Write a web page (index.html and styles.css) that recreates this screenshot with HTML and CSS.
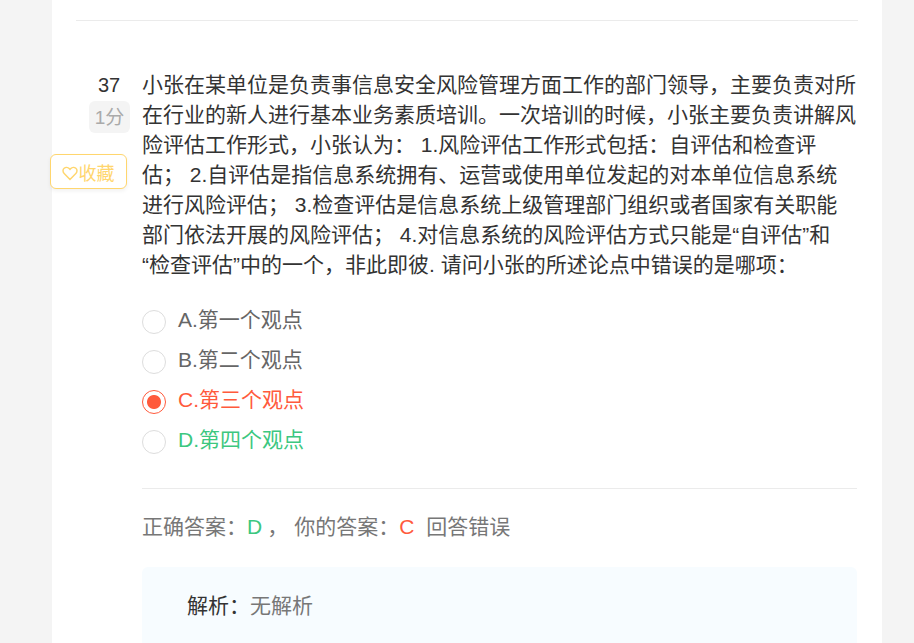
FILE: index.html
```html
<!DOCTYPE html>
<html lang="zh-CN">
<head>
    <meta charset="UTF-8">
    <meta name="viewport" content="width=device-width, initial-scale=1.0">
    <title>试题解析</title>
    <link rel="stylesheet" href="styles.css">
</head>
<body>
    <div class="card">
        <div class="top-line"></div>

        <div class="question">
            <div class="side">
                <div class="num">37</div>
                <div class="score">1分</div>
                <div class="collect">
                    <svg class="heart" viewBox="0 0 14 14" width="16" height="16">
                        <path d="M7 12.600 1.900 7.400C.5 6 .6 3.900 1.900 2.800c1.300-1.100 3.300-.9 4.400.3l.7.8.7-.8c1.100-1.200 3.100-1.400 4.400-.3 1.300 1.100 1.400 3.200 0 4.600z"/>
                    </svg>收藏
                </div>
            </div>

            <div class="main">
                <div class="stem">小张在某单位是负责事信息安全风险管理方面工作的部门领导，主要负责对所在行业的新人进行基本业务素质培训。一次培训的时候，小张主要负责讲解风险评估工作形式，小张认为： 1.风险评估工作形式包括：自评估和检查评估； 2.自评估是指信息系统拥有、运营或使用单位发起的对本单位信息系统进行风险评估； 3.检查评估是信息系统上级管理部门组织或者国家有关职能部门依法开展的风险评估； 4.对信息系统的风险评估方式只能是“自评估”和“检查评估”中的一个，非此即彼. 请问小张的所述论点中错误的是哪项：</div>

                <div class="options">
                    <div class="option"><span class="radio"></span>A.第一个观点</div>
                    <div class="option"><span class="radio"></span>B.第二个观点</div>
                    <div class="option wrong"><span class="radio"></span>C.第三个观点</div>
                    <div class="option right"><span class="radio"></span>D.第四个观点</div>
                </div>

                <div class="result">
                    正确答案：<span class="green">D</span><span class="comma">，</span>你的答案：<span class="red">C</span><span class="verdict">回答错误</span>
                </div>

                <div class="analysis">
                    <span class="label">解析：</span>无解析
                </div>
            </div>
        </div>
    </div>
</body>
</html>
```

FILE: styles.css
```css
:root {
    --line-color: #ebebeb;
    --text-color: #333;
    --grey-color: #666;
    --red-color: #ff5a3c;
    --green-color: #3cc77f;
    --yellow-color: #ffd66e;
}

* {
    margin: 0;
    padding: 0;
    box-sizing: border-box;
}

html, body {
    height: 643px;
    overflow: hidden;
}

body {
    background: #f4f4f4;
    color: var(--text-color);
    font-family: "Liberation Sans", "Noto Sans CJK SC", sans-serif;
}

.card {
    width: 830px;
    height: 643px;
    margin-left: 52px;
    padding: 0 24px;
    background: #fff;
}

.top-line {
    height: 21px;
    border-bottom: 1px solid var(--line-color);
}

.question {
    display: flex;
    margin-top: 49px;
}

.side {
    flex: none;
    width: 66px;
    padding-right: 12px;
    display: flex;
    flex-direction: column;
    align-items: flex-end;
}

.num {
    width: 41px;
    height: 31px;
    padding-right: 1px;
    font-size: 20px;
    line-height: 30px;
    text-align: center;
}

.score {
    width: 41px;
    height: 32px;
    background: #f4f4f4;
    border-radius: 6px;
    color: #aaa;
    font-size: 19px;
    line-height: 34px;
    text-align: center;
}

.collect {
    display: flex;
    align-items: center;
    justify-content: center;
    flex: none;
    width: 77px;
    height: 35px;
    margin: 21px 3px 0 0;
    background: #fff;
    border: 1px solid var(--yellow-color);
    border-radius: 6px;
    box-shadow: 0 2px 4px rgba(0, 0, 0, 0.06);
    color: var(--yellow-color);
    font-size: 18px;
}

.heart {
    fill: none;
    stroke: var(--yellow-color);
    stroke-width: 1.3;
    margin: 2px 1px 0 -1px;
}

.main {
    width: 715px;
}

.stem {
    font-size: 21px;
    line-height: 30px;
}

.options {
    margin-top: 18px;
}

.option {
    display: flex;
    align-items: center;
    height: 40px;
    color: var(--grey-color);
    font-size: 21px;
}

.radio {
    flex: none;
    width: 24px;
    height: 24px;
    margin: 7px 12px 0 0;
    border: 1px solid #ddd;
    border-radius: 50%;
    background: #fff;
}

.wrong {
    color: var(--red-color);
}

.wrong .radio {
    border-color: var(--red-color);
    background: radial-gradient(circle, var(--red-color) 0 6.5px, #fff 7.5px);
}

.right {
    color: var(--green-color);
}

.result {
    margin-top: 30px;
    padding-top: 23px;
    border-top: 1px solid var(--line-color);
    color: #777;
    font-size: 21px;
    line-height: 30px;
}

.green {
    color: var(--green-color);
}

.red {
    color: var(--red-color);
}

.comma {
    margin: 0 6px 0 5px;
}

.verdict {
    margin-left: 12px;
}

.analysis {
    margin-top: 25px;
    height: 80px;
    padding: 24px 45px;
    background: #f7fcff;
    border-radius: 6px;
    color: #777;
    font-size: 21px;
    line-height: 30px;
}

.label {
    color: var(--text-color);
}
```
